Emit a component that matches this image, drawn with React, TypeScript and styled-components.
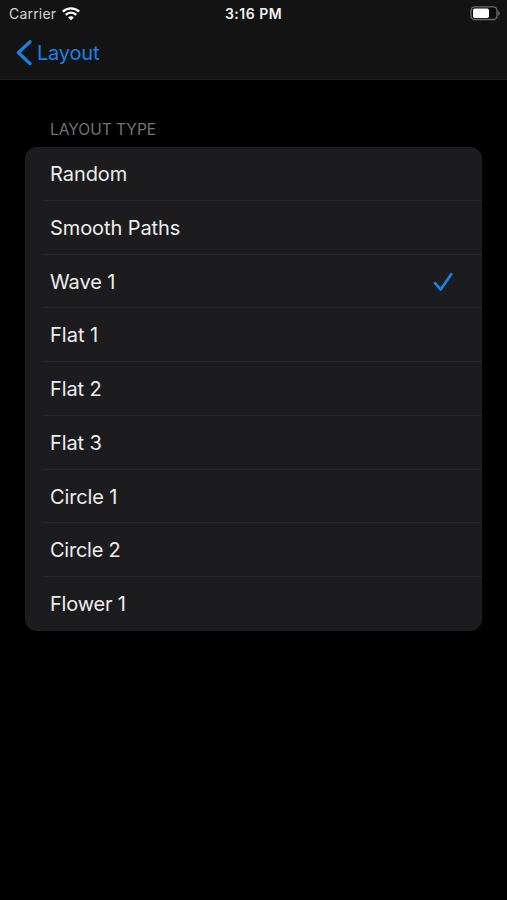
import React from 'react';
import styled, { createGlobalStyle } from 'styled-components';

const GlobalStyle = createGlobalStyle`
  *, *::before, *::after { box-sizing: border-box; }
  body {
    margin: 0;
    background: #000;
    font-family: Inter, "Liberation Sans", sans-serif;
    -webkit-font-smoothing: antialiased;
  }
`;

const Screen = styled.div`
  display: flex;
  flex-direction: column;
  width: 100%;
  height: 900px;
  overflow: hidden;
  background: #000;
`;

const Header = styled.header`
  height: 80px;
  background: #131313;
  border-bottom: 1px solid #1d1d1d;
`;

const StatusBar = styled.div`
  display: grid;
  grid-template-columns: 1fr auto 1fr;
  align-items: center;
  height: 27px;
  padding: 0 7px 0 9px;
  color: #f2f2f2;
`;

const Carrier = styled.div`
  display: flex;
  align-items: center;
  gap: 6px;
  font-size: 14px;
  letter-spacing: 0.2px;
  color: #d6d6d6;
`;

const Clock = styled.time`
  margin-right: 2px;
  font-size: 14px;
  font-weight: 600;
  letter-spacing: 0.5px;
`;

const BatterySlot = styled.div`
  display: flex;
  justify-content: flex-end;
`;

const NavBar = styled.nav`
  display: flex;
  align-items: center;
  height: 52px;
  padding-left: 16px;
`;

const BackButton = styled.button`
  display: flex;
  align-items: center;
  gap: 5px;
  padding: 0;
  border: 0;
  background: none;
  color: #1a82e6;
  font: inherit;
  font-size: 20px;
  letter-spacing: -0.2px;
`;

const Section = styled.section`
  display: flex;
  flex-direction: column;
  padding: 40px 25px 0;
`;

const SectionTitle = styled.h2`
  margin: 0;
  padding-left: 25px;
  height: 27px;
  line-height: 20px;
  font-size: 15.5px;
  font-weight: 400;
  letter-spacing: 0;
  color: #747476;
`;

const Options = styled.ul`
  margin: 0;
  padding: 0;
  list-style: none;
  border-radius: 12px;
  overflow: hidden;
  background: #1c1c1e;
`;

const Option = styled.li`
  padding-left: 18px;
`;

const OptionBody = styled.div<{ $divided: boolean }>`
  display: flex;
  align-items: center;
  justify-content: space-between;
  height: 53.75px;
  padding: 1.5px 29px 0 7px;
  border-bottom: 1px solid ${({ $divided }) => ($divided ? '#272729' : 'transparent')};
`;

const Label = styled.span<{ $tracking: number }>`
  font-size: 20px;
  line-height: 24px;
  letter-spacing: ${({ $tracking }) => $tracking}px;
  color: #ededed;
`;

const WifiIcon = () => (
  <svg width="18" height="14" viewBox="0 0 18 14" fill="none" stroke="#fff" strokeWidth="2.3">
    <path d="M.8 4.6C5.4.2 12.6.2 17.2 4.6" />
    <path d="M3.7 7.8C6.7 4.9 11.3 4.9 14.3 7.8" />
    <path d="M9 13.3L6.1 10.4C7.7 8.8 10.3 8.8 11.9 10.4Z" fill="#fff" stroke="none" />
  </svg>
);

const BatteryIcon = () => (
  <svg width="30" height="15" viewBox="0 0 30 15">
    <rect x="1" y=".9" width="26" height="12.6" rx="3.8" fill="#090909" stroke="#6b6b6b" strokeWidth="1.4" />
    <rect x="3" y="2.6" width="16" height="9.4" rx="1.8" fill="#fff" />
    <path d="M28.2 4.9C30.3 5.8 30.3 8.6 28.2 9.5Z" fill="#6b6b6b" />
  </svg>
);

const BackIcon = () => (
  <svg width="16" height="26" viewBox="0 0 16 26" fill="none" stroke="#1a82e6" strokeWidth="3.3" strokeLinecap="round" strokeLinejoin="round">
    <path d="M14 1.8L2.4 12.6L14 23.6" />
  </svg>
);

const CheckIcon = () => (
  <svg width="20" height="20" viewBox="0 0 20 20" fill="none" stroke="#1a82e6" strokeWidth="2.7" strokeLinecap="round" strokeLinejoin="round">
    <path d="M2 11.2L7.7 17.5L18.2 2.2" />
  </svg>
);

const layouts = [
  { name: 'Random', tracking: -0.05 },
  { name: 'Smooth Paths', tracking: -0.08 },
  { name: 'Wave 1', tracking: -0.1 },
  { name: 'Flat 1', tracking: 0 },
  { name: 'Flat 2', tracking: -0.1 },
  { name: 'Flat 3', tracking: -0.1 },
  { name: 'Circle 1', tracking: -0.15 },
  { name: 'Circle 2', tracking: -0.25 },
  { name: 'Flower 1', tracking: -0.2 },
];

export default function App() {
  const selected = 'Wave 1';
  return (
    <>
      <GlobalStyle />
      <Screen>
        <Header>
          <StatusBar>
            <Carrier>Carrier<WifiIcon /></Carrier>
            <Clock>3:16 PM</Clock>
            <BatterySlot><BatteryIcon /></BatterySlot>
          </StatusBar>
          <NavBar>
            <BackButton><BackIcon />Layout</BackButton>
          </NavBar>
        </Header>
        <Section>
          <SectionTitle>LAYOUT TYPE</SectionTitle>
          <Options>
            {layouts.map(({ name, tracking }, i) => (
              <Option key={name}>
                <OptionBody $divided={i < layouts.length - 1}>
                  <Label $tracking={tracking}>{name}</Label>
                  {name === selected && <CheckIcon />}
                </OptionBody>
              </Option>
            ))}
          </Options>
        </Section>
      </Screen>
    </>
  );
}
